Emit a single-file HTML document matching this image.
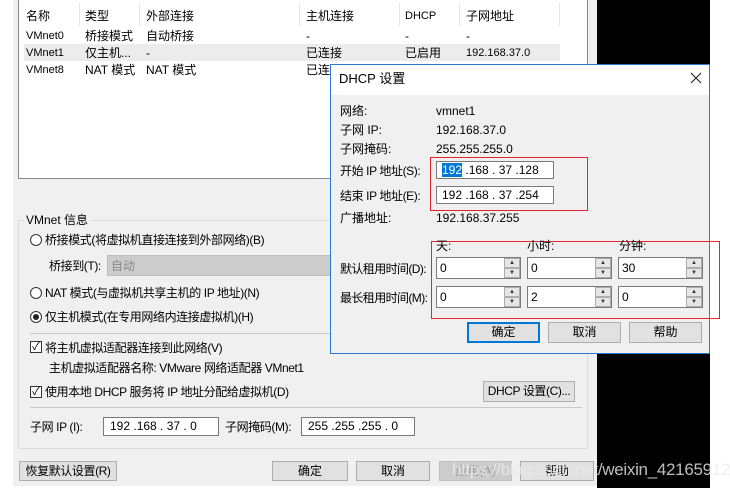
<!DOCTYPE html>
<html><head><meta charset="utf-8"><style>
*{margin:0;padding:0;box-sizing:border-box}
body{width:730px;height:488px;background:#fff;position:relative;overflow:hidden;font-family:"Liberation Sans","Noto Sans CJK SC",sans-serif;font-size:12px;color:#000}
.a{position:absolute;white-space:nowrap;line-height:14px}
.box{position:absolute}
.btn{position:absolute;background:#e1e1e1;border:1px solid #adadad;text-align:center;line-height:18px}
.fld{position:absolute;background:#fff;border:1px solid #7a7a7a;line-height:16px;padding-left:6px}
.radio{position:absolute;width:12px;height:12px;border:1px solid #333;border-radius:50%;background:#fff}
.chk{position:absolute;width:12px;height:12px;border:1px solid #333;background:#fff;font-size:11px;line-height:10px;text-align:center}
.spin{position:absolute;background:#fff;border:1px solid #7a7a7a;height:22px}
.spin span{position:absolute;left:3px;top:3px}
.sb{position:absolute;right:0;width:16px;height:10px;background:#e6e6e6;border:1px solid #adadad;font-size:6px;line-height:8px;text-align:center;color:#333}
.n{letter-spacing:-0.4px}
</style></head><body>
<div class="box" style="left:13px;top:0;width:584px;height:486px;background:#f0f0f0"></div>
<div class="box" style="left:597px;top:0;width:113px;height:488px;background:#000"></div>
<div class="box" style="left:18px;top:0;width:570px;height:179px;background:#fff;border:1px solid #828790;border-top:none"></div>
<div class="box" style="left:24px;top:44px;width:536px;height:17px;background:#ececec"></div>
<div class="box" style="left:79px;top:3px;width:1px;height:23px;background:#e5e5e5"></div>
<div class="box" style="left:139px;top:3px;width:1px;height:23px;background:#e5e5e5"></div>
<div class="box" style="left:299px;top:3px;width:1px;height:23px;background:#e5e5e5"></div>
<div class="box" style="left:399px;top:3px;width:1px;height:23px;background:#e5e5e5"></div>
<div class="box" style="left:459px;top:3px;width:1px;height:23px;background:#e5e5e5"></div>
<div class="box" style="left:559px;top:3px;width:1px;height:23px;background:#e5e5e5"></div>
<div class="a" style="left:26px;top:9px">名称</div><div class="a" style="left:85px;top:9px">类型</div><div class="a" style="left:146px;top:9px">外部连接</div><div class="a" style="left:306px;top:9px">主机连接</div><div class="a" style="left:405px;top:9px;font-size:11px">DHCP</div><div class="a" style="left:466px;top:9px">子网地址</div>
<div class="a" style="left:26px;top:29px;font-size:11px">VMnet0</div><div class="a" style="left:85px;top:29px">桥接模式</div><div class="a" style="left:146px;top:29px">自动桥接</div><div class="a" style="left:306px;top:29px">-</div><div class="a" style="left:405px;top:29px">-</div><div class="a" style="left:466px;top:29px">-</div>
<div class="a" style="left:26px;top:46px;font-size:11px">VMnet1</div><div class="a" style="left:85px;top:46px">仅主机...</div><div class="a" style="left:146px;top:46px">-</div><div class="a" style="left:306px;top:46px">已连接</div><div class="a" style="left:405px;top:46px">已启用</div><div class="a" style="left:466px;top:46px;font-size:11px">192.168.37.0</div>
<div class="a" style="left:26px;top:63px;font-size:11px">VMnet8</div><div class="a" style="left:85px;top:63px">NAT 模式</div><div class="a" style="left:146px;top:63px">NAT 模式</div><div class="a" style="left:306px;top:63px">已连</div>
<div class="box" style="left:18px;top:220px;width:570px;height:229px;border:1px solid #dcdcdc"></div>
<div class="a" style="left:24px;top:213px;background:#f0f0f0;padding:0 2px">VMnet 信息</div>
<div class="radio" style="left:30px;top:234px"></div><div class="a n" style="left:45px;top:233px">桥接模式(将虚拟机直接连接到外部网络)(B)</div>
<div class="a n" style="left:49px;top:259px">桥接到(T):</div>
<div class="box" style="left:107px;top:255px;width:240px;height:21px;background:#cccccc;border:1px solid #bcbcbc"></div>
<div class="a" style="left:111px;top:259px;color:#888">自动</div>
<div class="radio" style="left:30px;top:287px"></div><div class="a n" style="left:45px;top:286px">NAT 模式(与虚拟机共享主机的 IP 地址)(N)</div>
<div class="radio" style="left:30px;top:311px"></div><div class="box" style="left:33px;top:314px;width:6px;height:6px;border-radius:50%;background:#222"></div><div class="a n" style="left:45px;top:310px">仅主机模式(在专用网络内连接虚拟机)(H)</div>
<div class="box" style="left:30px;top:333px;width:300px;height:1px;background:#c8c8c8"></div>
<div class="chk" style="left:30px;top:341px">✓</div><div class="a n" style="left:45px;top:341px">将主机虚拟适配器连接到此网络(V)</div>
<div class="a n" style="left:49px;top:361px">主机虚拟适配器名称: VMware 网络适配器 VMnet1</div>
<div class="chk" style="left:30px;top:386px">✓</div><div class="a n" style="left:45px;top:385px">使用本地 DHCP 服务将 IP 地址分配给虚拟机(D)</div>
<div class="btn n" style="left:483px;top:381px;width:92px;height:21px">DHCP 设置(C)...</div>
<div class="box" style="left:30px;top:407px;width:552px;height:1px;background:#c8c8c8"></div>
<div class="a n" style="left:30px;top:420px">子网 IP (I):</div>
<div class="fld" style="left:103px;top:417px;width:116px;height:19px">192 .168 . 37 . 0</div>
<div class="a n" style="left:225px;top:420px">子网掩码(M):</div>
<div class="fld" style="left:301px;top:417px;width:114px;height:19px">255 .255 .255 . 0</div>
<div class="btn n" style="left:19px;top:461px;width:98px;height:20px">恢复默认设置(R)</div>
<div class="btn" style="left:272px;top:461px;width:76px;height:20px">确定</div>
<div class="btn" style="left:356px;top:461px;width:74px;height:20px">取消</div>
<div class="btn" style="left:439px;top:461px;width:73px;height:20px;background:#ccc;border-color:#bfbfbf;color:#999">应用(A)</div>
<div class="btn" style="left:520px;top:461px;width:74px;height:20px">帮助</div>
<div class="a" style="left:452px;top:460px;font-size:17px;line-height:20px;color:rgba(235,235,235,0.8);letter-spacing:-0.3px">https://blog.csdn.net/weixin_42165912</div>
<div class="box" style="left:330px;top:64px;width:380px;height:290px;background:#f0f0f0;border:1px solid #2b79d0"></div>
<div class="box" style="left:331px;top:65px;width:378px;height:30px;background:#fff"></div>
<div class="a" style="left:339px;top:72px;font-size:13px">DHCP 设置</div>
<svg class="box" style="left:690px;top:72px" width="12" height="12"><path d="M1 1L11 11M11 1L1 11" stroke="#222" stroke-width="1.1" fill="none"/></svg>
<div class="a" style="left:340px;top:104px">网络:</div><div class="a" style="left:436px;top:104px">vmnet1</div>
<div class="a" style="left:340px;top:123px">子网 IP:</div><div class="a" style="left:436px;top:123px">192.168.37.0</div>
<div class="a" style="left:340px;top:142px">子网掩码:</div><div class="a" style="left:436px;top:142px">255.255.255.0</div>
<div class="a n" style="left:340px;top:164px">开始 IP 地址(S):</div>
<div class="fld" style="left:436px;top:161px;width:118px;height:18px;padding-left:5px"><span style="background:#0078d7;color:#fff">192</span> .168 . 37 .128</div>
<div class="a n" style="left:340px;top:189px">结束 IP 地址(E):</div>
<div class="fld" style="left:436px;top:186px;width:118px;height:18px;padding-left:5px">192 .168 . 37 .254</div>
<div class="a" style="left:340px;top:211px">广播地址:</div><div class="a" style="left:436px;top:211px">192.168.37.255</div>
<div class="box" style="left:430px;top:157px;width:158px;height:54px;border:1px solid #e0262f"></div>
<div class="box" style="left:431px;top:241px;width:289px;height:78px;border:1px solid #e0262f"></div>
<div class="a" style="left:436px;top:239px">天:</div><div class="a" style="left:527px;top:239px">小时:</div><div class="a" style="left:619px;top:239px">分钟:</div>
<div class="a" style="left:340px;top:262px;letter-spacing:-0.6px">默认租用时间(D):</div>
<div class="a" style="left:340px;top:291px;letter-spacing:-0.6px">最长租用时间(M):</div>
<div class="spin" style="left:436px;top:257px;width:85px"><span>0</span><div class="sb" style="top:0">▲</div><div class="sb" style="top:10px">▼</div></div>
<div class="spin" style="left:527px;top:257px;width:85px"><span>0</span><div class="sb" style="top:0">▲</div><div class="sb" style="top:10px">▼</div></div>
<div class="spin" style="left:618px;top:257px;width:85px"><span>30</span><div class="sb" style="top:0">▲</div><div class="sb" style="top:10px">▼</div></div>
<div class="spin" style="left:436px;top:286px;width:85px"><span>0</span><div class="sb" style="top:0">▲</div><div class="sb" style="top:10px">▼</div></div>
<div class="spin" style="left:527px;top:286px;width:85px"><span>2</span><div class="sb" style="top:0">▲</div><div class="sb" style="top:10px">▼</div></div>
<div class="spin" style="left:618px;top:286px;width:85px"><span>0</span><div class="sb" style="top:0">▲</div><div class="sb" style="top:10px">▼</div></div>
<div class="btn" style="left:467px;top:322px;width:73px;height:21px;border:2px solid #0078d7;line-height:17px">确定</div>
<div class="btn" style="left:548px;top:322px;width:73px;height:21px">取消</div>
<div class="btn" style="left:629px;top:322px;width:73px;height:21px">帮助</div>
</body></html>
